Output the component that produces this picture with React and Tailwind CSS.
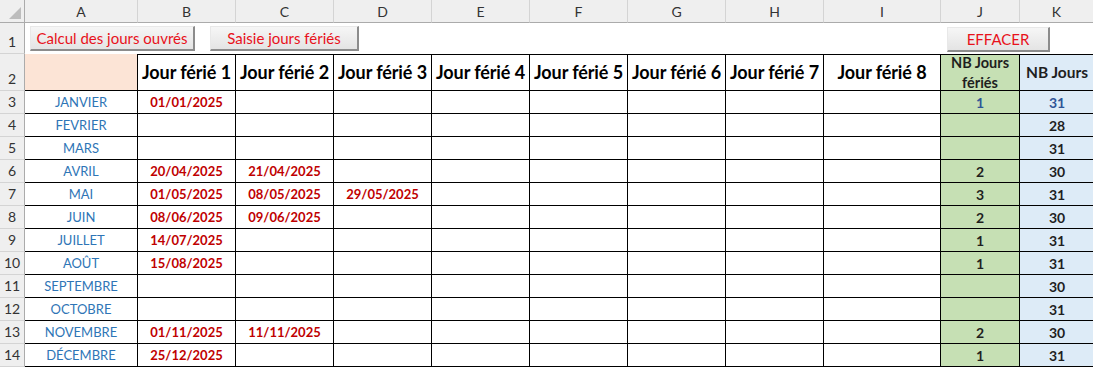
import React from 'react';

const FONT = { fontFamily: 'Lato, "Open Sans", "Noto Sans", sans-serif' };

const LETTERS = [
    { l: 'A', w: 'w-[113px]' },
    { l: 'B', w: 'w-[98px]' },
    { l: 'C', w: 'w-[98px]' },
    { l: 'D', w: 'w-[98px]' },
    { l: 'E', w: 'w-[98px]' },
    { l: 'F', w: 'w-[98px]' },
    { l: 'G', w: 'w-[98px]' },
    { l: 'H', w: 'w-[98px]' },
    { l: 'I', w: 'w-[117px]' },
    { l: 'J', w: 'w-[79px]' },
    { l: 'K', w: 'w-[74px]' },
];

const MONTHS = [
    ['JANVIER', ['01/01/2025'], '1', '31', true],
    ['FEVRIER', [], '', '28'],
    ['MARS', [], '', '31'],
    ['AVRIL', ['20/04/2025', '21/04/2025'], '2', '30'],
    ['MAI', ['01/05/2025', '08/05/2025', '29/05/2025'], '3', '31'],
    ['JUIN', ['08/06/2025', '09/06/2025'], '2', '30'],
    ['JUILLET', ['14/07/2025'], '1', '31'],
    ['AOÛT', ['15/08/2025'], '1', '31'],
    ['SEPTEMBRE', [], '', '30'],
    ['OCTOBRE', [], '', '31'],
    ['NOVEMBRE', ['01/11/2025', '11/11/2025'], '2', '30'],
    ['DÉCEMBRE', ['25/12/2025'], '1', '31'],
];

const RowHead = ({ n, h }) => (
    <div className={`w-[25px] shrink-0 ${h} bg-[#efefef] border-r border-b border-r-[#ababab] border-b-[#d4d4d4] flex items-end justify-center pb-[1px] text-[14px] text-[#333]`}>
        {n}
    </div>
);

const SheetButton = ({ children, className }) => (
    <div className={`h-[25px] flex items-center justify-center bg-gradient-to-b from-[#f6f6f6] to-[#e4e4e4] border border-t-[#e8e8e8] border-l-[#e8e8e8] border-r-2 border-b-2 border-r-[#8c8c8c] border-b-[#8c8c8c] text-[15px] text-[#e8121b] ${className}`}>
        {children}
    </div>
);

export default function App() {
    return (
        <div className="w-[1093px] h-[367px] overflow-hidden bg-white select-none" style={FONT}>
            {/* en-têtes de colonnes */}
            <div className="flex h-[23px]">
                <div className="w-[25px] shrink-0 bg-[#efefef] border-r border-b border-[#ababab] relative">
                    <svg className="absolute right-[3px] bottom-[3px]" width="12" height="12" viewBox="0 0 12 12">
                        <polygon points="12,0 12,12 0,12" fill="#bdbdbd" />
                    </svg>
                </div>
                {LETTERS.map((c) => (
                    <div key={c.l} className={`${c.w} shrink-0 bg-[#efefef] border-r border-b border-r-[#d4d4d4] border-b-[#ababab] flex items-center justify-center text-[14px] text-[#333]`}>
                        {c.l}
                    </div>
                ))}
            </div>

            {/* ligne 1 : boutons */}
            <div className="flex h-[31px]">
                <RowHead n="1" h="h-[31px]" />
                <div className="flex items-start pt-[3px]">
                    <SheetButton className="ml-[5px] w-[165px]">Calcul des jours ouvrés</SheetButton>
                    <SheetButton className="ml-[15px] w-[149px]">Saisie jours fériés</SheetButton>
                    <SheetButton className="ml-[588px] w-[103px] mt-[1px]">EFFACER</SheetButton>
                </div>
            </div>

            {/* ligne 2 : titres */}
            <div className="flex h-[37px]">
                <RowHead n="2" h="h-[37px]" />
                <div className="w-[113px] shrink-0 bg-[#fce4d6] border-r border-b border-black" />
                {[1, 2, 3, 4, 5, 6, 7].map((i) => (
                    <div key={i} className="w-[98px] shrink-0 border-t border-r border-b border-black flex items-center justify-center text-[18px] font-bold text-black whitespace-nowrap tracking-[-0.1px]">
                        Jour férié {i}
                    </div>
                ))}
                <div className="w-[117px] shrink-0 border-t border-r border-b border-black flex items-center justify-center text-[18px] font-bold text-black whitespace-nowrap tracking-[-0.1px]">
                    Jour férié 8
                </div>
                <div className="w-[79px] shrink-0 bg-[#c6e0b4] border-t border-r border-b border-black flex items-center justify-center text-center text-[14.5px] font-bold leading-[20px] text-[#1f1f1f]">
                    NB Jours<br />fériés
                </div>
                <div className="w-[74px] shrink-0 bg-[#ddebf7] border-t border-b border-black flex items-center justify-center text-[15.5px] font-bold text-[#1f1f1f] whitespace-nowrap">
                    NB Jours
                </div>
            </div>

            {/* lignes 3 à 14 : mois */}
            {MONTHS.map(([name, dates, nb, days, blue], idx) => (
                <div key={name} className="flex h-[23px]">
                    <RowHead n={idx + 3} h="h-[23px]" />
                    <div className="w-[113px] shrink-0 border-r border-b border-black flex items-center justify-center pt-[2px] text-[13px] text-[#2e75b6]">
                        {name}
                    </div>
                    {[0, 1, 2, 3, 4, 5, 6].map((i) => (
                        <div key={i} className="w-[98px] shrink-0 border-r border-b border-black flex items-center justify-center pt-[2px] text-[13px] font-bold text-[#c00000]">
                            {dates[i] || ''}
                        </div>
                    ))}
                    <div className="w-[117px] shrink-0 border-r border-b border-black" />
                    <div className={`w-[79px] shrink-0 bg-[#c6e0b4] border-r border-b border-black flex items-center justify-center pt-[1px] text-[14px] font-bold ${blue ? 'text-[#2f5597]' : 'text-[#1f1f1f]'}`}>
                        {nb}
                    </div>
                    <div className={`w-[74px] shrink-0 bg-[#ddebf7] border-b border-black flex items-center justify-center pt-[1px] text-[14px] font-bold ${blue ? 'text-[#2f5597]' : 'text-[#1f1f1f]'}`}>
                        {days}
                    </div>
                </div>
            ))}
        </div>
    );
}
